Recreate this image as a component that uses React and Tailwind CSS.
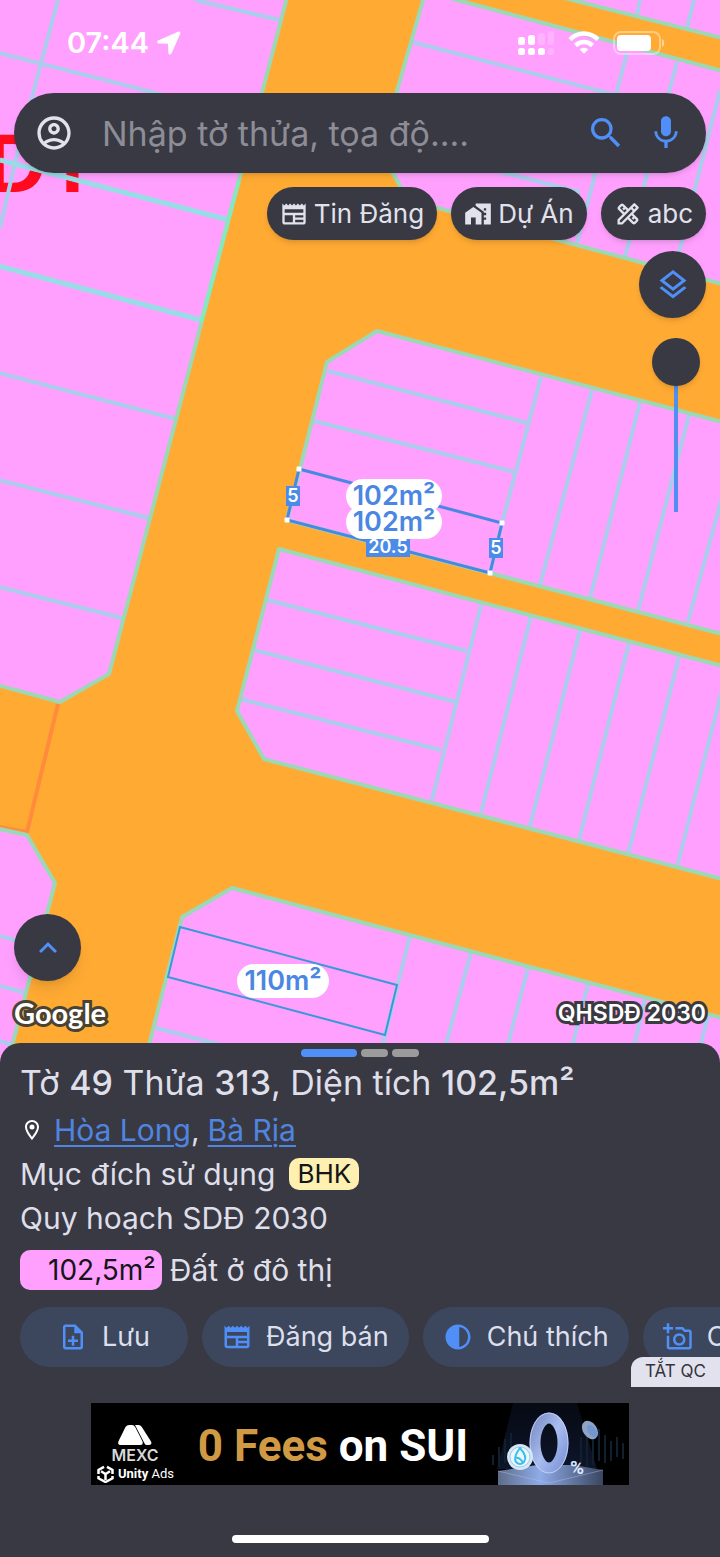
import {
    MdContrast,
    MdHomeWork,
    MdKeyboardArrowUp,
    MdMic,
    MdOutlineAccountCircle,
    MdOutlineAddAPhoto,
    MdOutlineDesignServices,
    MdOutlineLayers,
    MdOutlineLocationOn,
    MdOutlineNewspaper,
    MdOutlineNoteAdd,
    MdSearch,
} from 'react-icons/md';

const blocks = [
    '-10,-10 289,-10 109,674 60,702 -10,683',
    '426,-10 420,-10 457,0 730,73 730,286 408,200 380,150',
    '533,-10 730,-10 730,40',
    '327,362 377,331 730,424 730,636 287,520',
    '279,549 730,668 730,881 264,759 237,711',
    '182,917 232,888 730,1020 730,1080 140,1080',
    '-10,827 27,835 55,883 3,1080 -10,1080',
];

const parcelLines = [
    'M-5 265L201 320M-5 372L176 419M-5 479L149 518M-5 586L122 618',
    'M-5 159L229 220M-5 52L258 119M195 0L280 20M58 0L41 63L15 163L0 228',
    'M412 42L700 117M390 144L580 192M627 53L577 243M677 62L625 257M720 90L674 272',
    'M640 0L637 15M694 0L687 28',
    'M328 371L528 423M314 421L515 472M502 523L490 573',
    'M541 377L502 523M592 390L540 585M640 402L590 599M689 415L638 611M724 490L688 622',
    'M267 600L467 651M254 650L456 702M240 699L441 750',
    'M481 605L432 800M531 616L481 813M580 630L530 826M629 643L579 840M679 657L628 854M722 690L677 867',
    'M410 936L378 1063M471 952L441 1063M528 968L503 1063M588 984L568 1063M645 1000L630 1063M708 1016L696 1063',
    'M156 1028L290 1063M0 936L40 947M0 986L26 993M0 1041L12 1045',
];

const areaLabels = [
    { text: '102m²', x: 394, y: 496, w: 96 },
    { text: '102m²', x: 394, y: 522, w: 96 },
    { text: '110m²', x: 283, y: 981, w: 92 },
];

const edgeLabels = [
    { text: '5', x: 293, y: 496, w: 14 },
    { text: '20.5', x: 388, y: 547, w: 44 },
    { text: '5', x: 496, y: 548, w: 14 },
];

const corners = [
    [299, 469],
    [502, 523],
    [490, 573],
    [287, 520],
];

function PlanMap() {
    return (
        <svg
            className="absolute inset-0 size-full"
            viewBox="0 0 720 1063"
            preserveAspectRatio="xMidYMin slice"
            fontFamily="Inter, sans-serif"
            textAnchor="middle"
        >
            <rect x="-10" y="-10" width="740" height="1100" fill="#ffaa33" />
            <path d="M58 704L27 832L-5 826" fill="none" stroke="#ff8c3c" strokeWidth="4" />
            {blocks.map((points) => (
                <polygon key={points} points={points} fill="#ffa0ff" />
            ))}
            <text
                x="-14"
                y="192"
                fill="#ff0a1e"
                fontFamily="Liberation Sans, sans-serif"
                fontSize="84"
                fontWeight="700"
                textAnchor="start"
            >
                DT
            </text>
            <path d={parcelLines.join('')} fill="none" stroke="#a9cdea" strokeWidth="4" />
            <path d="M-5 265L201 320M0 160L229 220" stroke="#98dde6" strokeWidth="5" />
            {blocks.map((points) => (
                <polygon
                    key={points}
                    points={points}
                    fill="none"
                    stroke="#9cd8b6"
                    strokeWidth="4"
                    strokeLinejoin="round"
                />
            ))}
            <path d="M239 180L201 322" stroke="#86e8bf" strokeWidth="4" />

            <polygon
                points="180,927 397,985 385,1035 168,977"
                fill="none"
                stroke="#3b97dc"
                strokeWidth="2"
            />
            <polygon
                points="299,469 502,523 490,573 287,520"
                fill="none"
                stroke="#4a87e4"
                strokeWidth="3"
            />
            {corners.map(([x, y]) => (
                <rect key={x} x={x - 2.5} y={y - 2.5} width="5" height="5" rx="1" fill="#fff" />
            ))}
            {edgeLabels.map((label) => (
                <g key={label.x}>
                    <rect
                        x={label.x - label.w / 2}
                        y={label.y - 10}
                        width={label.w}
                        height="20"
                        fill="#4b8bea"
                    />
                    <text x={label.x} y={label.y + 6} fill="#fff" fontSize="18" fontWeight="600">
                        {label.text}
                    </text>
                </g>
            ))}
            {areaLabels.map((label) => (
                <g key={label.y}>
                    <rect
                        x={label.x - label.w / 2}
                        y={label.y - 17}
                        width={label.w}
                        height="34"
                        rx="17"
                        fill="#fff"
                    />
                    <text x={label.x} y={label.y + 9} fill="#4b87e2" fontSize="27" fontWeight="600">
                        {label.text}
                    </text>
                </g>
            ))}
        </svg>
    );
}

function StatusBar() {
    return (
        <div className="flex h-[86px] items-center justify-between pr-[41px] pl-[53px] text-white">
            <div className="flex items-center gap-2">
                <span className="text-[29px] font-semibold">07:44</span>
                <svg className="h-6 w-6" viewBox="0 0 24 24" fill="currentColor">
                    <path d="M21 0.8L1.6 9.3C-0.6 10.3 -0.1 12.3 2 12.4L11 12.8L11.4 21.7C11.5 23.9 13.6 24.2 14.6 22.2L23.2 3C23.9 1.3 22.6 0.1 21 0.8Z" />
                </svg>
            </div>
            <div className="flex items-center gap-[13px]">
                <svg className="h-6 w-[38px]" viewBox="0 0 38 24" fill="currentColor">
                    <rect x="1" y="17" width="7" height="7" rx="2.5" />
                    <rect x="11" y="17" width="7" height="7" rx="2.5" />
                    <rect x="21" y="17" width="7" height="7" rx="2.5" />
                    <rect x="1" y="6" width="7" height="8" rx="2.5" />
                    <rect x="11" y="4" width="7" height="10" rx="2.5" />
                    <rect x="21" y="2" width="7" height="12" rx="2.5" opacity="0.2" />
                    <rect x="31" y="0" width="6" height="14" rx="2.5" opacity="0.2" />
                    <rect x="31" y="17" width="6" height="7" rx="2.5" opacity="0.2" />
                </svg>
                <svg className="h-6 w-8" viewBox="0 0 32 24" fill="none" stroke="currentColor">
                    <path d="M2 8.5C10 0.5 22 0.5 30 8.5" strokeWidth="4.5" />
                    <path d="M7.5 14.5C12.5 9.8 19.5 9.8 24.5 14.5" strokeWidth="4.5" />
                    <path
                        d="M11.8 18.5C14 16.3 18 16.3 20.2 18.5L16 22.8Z"
                        fill="currentColor"
                        stroke="none"
                    />
                </svg>
                <svg className="h-6 w-[52px]" viewBox="0 0 52 24" fill="currentColor">
                    <rect
                        x="1"
                        y="1"
                        width="46"
                        height="22"
                        rx="7"
                        fill="none"
                        stroke="currentColor"
                        strokeWidth="2"
                        opacity="0.4"
                    />
                    <rect x="4" y="4" width="34" height="16" rx="4" />
                    <path d="M49 8C52 9.5 52 14.5 49 16Z" opacity="0.5" />
                </svg>
            </div>
        </div>
    );
}

function Chip({ icon: Icon, children }) {
    return (
        <button
            type="button"
            className="flex h-[53px] items-center gap-1.5 rounded-full bg-[#393943] px-[13px] text-[26px] whitespace-nowrap text-[#e2e2ec] shadow-md"
        >
            <Icon className="size-7" />
            {children}
        </button>
    );
}

function ActionButton({ icon: Icon, children }) {
    return (
        <button
            type="button"
            className="flex h-[60px] min-w-[168px] shrink-0 items-center justify-center gap-3.5 rounded-full bg-[#3c475d] px-5 text-[27px] whitespace-nowrap text-[#dcdfec]"
        >
            <Icon className="size-[30px] text-[#4f8ff7]" />
            {children}
        </button>
    );
}

function AdBanner() {
    return (
        <a
            href="#"
            className="mx-auto flex h-[82px] w-full max-w-[538px] items-stretch justify-between overflow-hidden bg-black text-white"
        >
            <div className="flex w-[88px] flex-col justify-end pb-0.5">
                <svg className="mx-auto h-5 w-[34px]" viewBox="0 0 34 20" fill="#fff">
                    <path d="M7.5 2Q9 0 11 0H14Q16 0 17.2 2L24.5 16.5Q25.500 20 22.500 20H3Q-1 20 0.600 16Z" />
                    <path d="M17 0H20.500Q22.500 0 23.800 2L33 16.500Q34.500 20 31 20H28.500Q27 20 26.300 18Z" />
                </svg>
                <span className="text-center text-base leading-5 font-semibold text-[#d8d8d8]">
                    MEXC
                </span>
                <div className="flex h-[18px] items-center gap-1 pl-1.5">
                    <svg
                        className="h-[18px] w-[17px] shrink-0"
                        viewBox="0 0 17 18"
                        fill="none"
                        stroke="#fff"
                        strokeWidth="2.500"
                    >
                        <path d="M7 1.800L1.500 5V9M10 1.800L15.500 5V9M1.500 11V13.300L8.500 17L15.500 13.300V11" />
                        <path d="M4 6.300L8.500 9L13 6.300M8.500 9V15" />
                    </svg>
                    <span className="font-[Roboto] text-[13px] whitespace-nowrap">
                        <b>Unity</b> Ads
                    </span>
                </div>
            </div>
            <p className="self-center pt-1 font-[Roboto] text-[44px] leading-none font-bold whitespace-nowrap">
                <span className="text-[#d09a45]">0 Fees</span> on SUI
            </p>
            <svg className="h-full w-[142px]" viewBox="0 0 142 82">
                <defs>
                    <linearGradient id="beam" x1="0" y1="0" x2="0" y2="1">
                        <stop offset="0" stopColor="#080c18" />
                        <stop offset="1" stopColor="#111b36" />
                    </linearGradient>
                    <linearGradient id="stand" x1="0" y1="0" x2="1" y2="0">
                        <stop offset="0" stopColor="#5d6c89" />
                        <stop offset="0.400" stopColor="#8fabe8" />
                        <stop offset="1" stopColor="#39465f" />
                    </linearGradient>
                    <linearGradient id="zero" x1="0" y1="0" x2="1" y2="1">
                        <stop offset="0" stopColor="#7d90c8" />
                        <stop offset="0.500" stopColor="#a9bdf0" />
                        <stop offset="1" stopColor="#7f96d8" />
                    </linearGradient>
                </defs>
                <path d="M26 0H90L110 66H10Z" fill="url(#beam)" opacity="0.800" />
                <path
                    d="M6 52V62M12 44V64M18 36V60M24 30V56M94 34V60M100 28V64M106 34V62M112 26V58M118 32V60M124 38V58M130 34V54M136 40V56"
                    stroke="#10202f"
                    strokeWidth="2"
                />
                <path d="M11 68L50 62H86L116 67V82H11Z" fill="url(#stand)" />
                <path d="M11 68L62 80L116 67" fill="none" stroke="#b6c8f3" opacity="0.400" />
                <ellipse cx="62" cy="40" rx="14" ry="25" fill="none" stroke="url(#zero)" strokeWidth="11" />
                <ellipse cx="62" cy="40" rx="19" ry="30" fill="none" stroke="#d5e0ff" opacity="0.700" />
                <circle cx="33" cy="54" r="13" fill="#d6e8f5" />
                <circle cx="33" cy="54" r="10" fill="#e9f7ff" stroke="#9fcbe6" />
                <path
                    d="M33 45Q41 54 37 59Q33 63 29 59Q26 54 33 45ZM28 55Q33 54 36 60"
                    fill="none"
                    stroke="#3dbdea"
                    strokeWidth="2"
                />
                <ellipse cx="103" cy="27" rx="7" ry="10" fill="#8fa4c4" transform="rotate(-35 103 27)" />
                <ellipse cx="105" cy="28" rx="4" ry="7" fill="#7397cf" transform="rotate(-35 105 28)" />
                <text
                    x="83"
                    y="71"
                    fill="#dfe9ff"
                    fontFamily="Roboto, sans-serif"
                    fontSize="19"
                    fontWeight="700"
                >
                    %
                </text>
            </svg>
        </a>
    );
}

export default function App() {
    return (
        <div className="flex min-h-screen flex-col bg-[#393943] font-[Inter,sans-serif]">
            <main className="relative flex flex-1 flex-col overflow-hidden">
                <PlanMap />
                <div className="relative flex flex-1 flex-col px-3.5 pb-8">
                    <StatusBar />

                    <form className="mt-[7px] flex h-20 items-center gap-5 rounded-full bg-[#393943] px-5 shadow-md">
                        <button type="button" aria-label="Tài khoản" className="text-[#e2e2ec]">
                            <MdOutlineAccountCircle className="size-10" />
                        </button>
                        <input
                            type="text"
                            aria-label="Tìm kiếm"
                            placeholder="Nhập tờ thửa, tọa độ...."
                            className="min-w-0 flex-1 bg-transparent px-2 text-[34px] text-white outline-none placeholder:text-[#8d8d96]"
                        />
                        <button type="submit" aria-label="Tìm" className="text-[#4f8ff7]">
                            <MdSearch className="size-10" />
                        </button>
                        <button type="button" aria-label="Giọng nói" className="text-[#4f8ff7]">
                            <MdMic className="size-10" />
                        </button>
                    </form>

                    <div className="mt-3.5 flex justify-end gap-3.5">
                        <Chip icon={MdOutlineNewspaper}>Tin Đăng</Chip>
                        <Chip icon={MdHomeWork}>Dự Án</Chip>
                        <Chip icon={MdOutlineDesignServices}>abc</Chip>
                    </div>

                    <div className="mt-[11px] flex flex-col items-end gap-5">
                        <button
                            type="button"
                            aria-label="Lớp bản đồ"
                            className="flex size-[67px] items-center justify-center rounded-full bg-[#393943] text-[#4f8ff7] shadow-md"
                        >
                            <MdOutlineLayers className="size-9" />
                        </button>
                        <input
                            type="range"
                            aria-label="Độ trong suốt"
                            defaultValue="0"
                            className="mr-1.5 h-[174px] w-12 appearance-none bg-[linear-gradient(#4f8ff0,#4f8ff0)] bg-[length:4px_100%] bg-center bg-no-repeat [writing-mode:vertical-lr] [&::-webkit-slider-thumb]:size-12 [&::-webkit-slider-thumb]:appearance-none [&::-webkit-slider-thumb]:rounded-full [&::-webkit-slider-thumb]:bg-[#393943] [&::-webkit-slider-thumb]:shadow-md"
                        />
                    </div>

                    <div className="mt-auto flex flex-col gap-3.5">
                        <button
                            type="button"
                            aria-label="Mở rộng"
                            className="flex size-[67px] items-center justify-center rounded-full bg-[#393943] text-[#4f8ff7] shadow-lg"
                        >
                            <MdKeyboardArrowUp className="size-9" />
                        </button>
                        <div className="flex h-9 items-center justify-between text-white [paint-order:stroke_fill]">
                            <span className="font-[Lato] text-[29px] leading-8 font-bold [-webkit-text-stroke:6px_#4a4232]">
                                Google
                            </span>
                            <span className="text-[23px] leading-8 font-semibold [-webkit-text-stroke:6px_#3a3a40]">
                                QHSDĐ 2030
                            </span>
                        </div>
                    </div>
                </div>
            </main>

            <section className="relative -mt-5 flex flex-col rounded-t-[20px] bg-[#393943] pt-1.5 pb-3.5 text-[30px] text-[#dfdfea]">
                <div className="flex h-2 justify-center gap-1">
                    <span className="w-14 rounded-full bg-[#4f8ff7]" />
                    <span className="w-[27px] rounded-full bg-[#9b9b9b]" />
                    <span className="w-[27px] rounded-full bg-[#9b9b9b]" />
                </div>

                <div className="px-5">
                    <h1 className="mt-1 text-[34px] leading-[44px]">
                        Tờ <span className="font-medium">49</span> Thửa{' '}
                        <span className="font-medium">313</span>, Diện tích{' '}
                        <span className="font-medium">102,5m²</span>
                    </h1>
                    <p className="mt-[3px] flex items-center leading-[44px]">
                        <MdOutlineLocationOn className="mr-2.5 size-6 text-white" />
                        <a
                            href="#"
                            className="text-[#4f85e0] underline decoration-2 underline-offset-4"
                        >
                            Hòa Long
                        </a>
                        <span className="mr-2">,</span>
                        <a
                            href="#"
                            className="text-[#4f85e0] underline decoration-2 underline-offset-4"
                        >
                            Bà Rịa
                        </a>
                    </p>
                    <p className="flex items-center gap-3.5 leading-[44px]">
                        Mục đích sử dụng
                        <span className="rounded-[10px] bg-[#fdf0b0] px-2 text-[26px] leading-8 text-[#15151a]">
                            BHK
                        </span>
                    </p>
                    <p className="leading-[44px]">Quy hoạch SDĐ 2030</p>
                    <p className="mt-2.5 flex items-center gap-2 leading-10">
                        <span className="rounded-[10px] bg-[#ffa0ff] pr-1.5 pl-7 text-[28px] text-[#15151a]">
                            102,5m²
                        </span>
                        Đất ở đô thị
                    </p>
                </div>

                <div className="mt-[17px] flex gap-3.5 overflow-hidden pl-5">
                    <ActionButton icon={MdOutlineNoteAdd}>Lưu</ActionButton>
                    <ActionButton icon={MdOutlineNewspaper}>Đăng bán</ActionButton>
                    <ActionButton icon={MdContrast}>Chú thích</ActionButton>
                    <ActionButton icon={MdOutlineAddAPhoto}>Chụp ảnh</ActionButton>
                </div>

                <div className="relative pt-9">
                    <button
                        type="button"
                        className="absolute -top-2.5 right-0 h-[30px] rounded-tl-xl bg-[#e2e1ee] px-3.5 text-[17px] text-[#33333c]"
                    >
                        TẮT QC
                    </button>
                    <AdBanner />
                </div>

                <div className="mx-auto mt-[50px] h-2 w-[257px] rounded-full bg-white" />
            </section>
        </div>
    );
}
